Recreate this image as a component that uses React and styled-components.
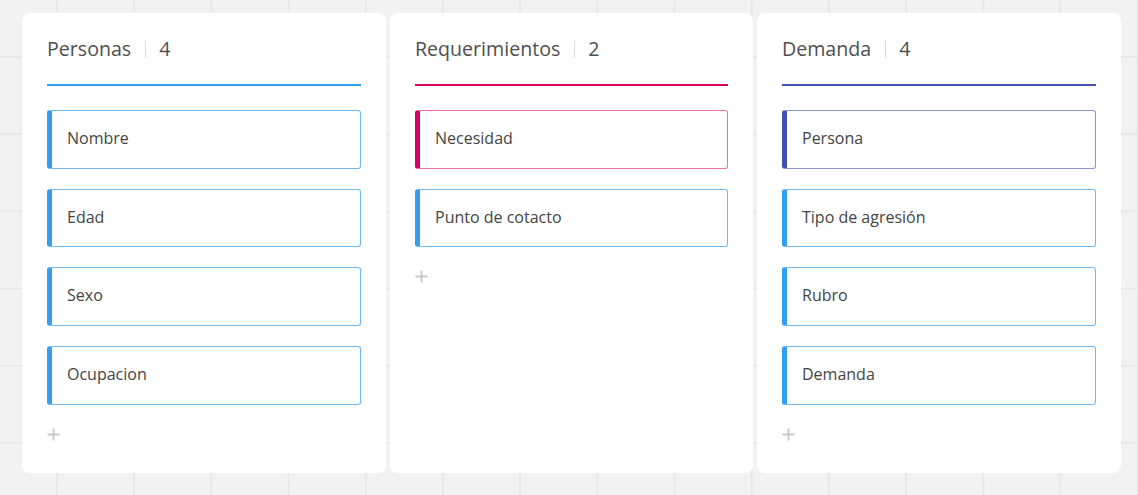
import React from 'react';
import styled, { createGlobalStyle } from 'styled-components';

const GlobalStyle = createGlobalStyle`
    html, body {
        margin: 0;
        padding: 0;
    }
    body {
        width: 1138px;
        height: 495px;
        overflow: hidden;
        font-family: "Open Sans", "Noto Sans", sans-serif;
        background-color: #f2f2f2;
        background-image:
            linear-gradient(to right, #e8e8e8 2px, transparent 2px),
            linear-gradient(to bottom, #e8e8e8 2px, transparent 2px);
        background-size: 77.2px 77.2px;
        background-position: 56px 56px;
    }
`;

const palette = {
    blue: { line: '#339ff0', bar: '#339ff0', border: '#6db9f5' },
    pink: { line: '#d9005f', bar: '#d9005f', border: '#ee72a4' },
    indigo: { line: '#4650b4', bar: '#4650b4', border: '#8e93d1' },
};

const columns = [
    {
        title: 'Personas',
        color: 'blue',
        items: [
            { label: 'Nombre', color: 'blue' },
            { label: 'Edad', color: 'blue' },
            { label: 'Sexo', color: 'blue' },
            { label: 'Ocupacion', color: 'blue' },
        ],
    },
    {
        title: 'Requerimientos',
        color: 'pink',
        items: [
            { label: 'Necesidad', color: 'pink' },
            { label: 'Punto de cotacto', color: 'blue' },
        ],
    },
    {
        title: 'Demanda',
        color: 'indigo',
        items: [
            { label: 'Persona', color: 'indigo' },
            { label: 'Tipo de agresión', color: 'blue' },
            { label: 'Rubro', color: 'blue' },
            { label: 'Demanda', color: 'blue' },
        ],
    },
];

const Board = styled.div`
    display: flex;
    align-items: stretch;
    gap: 4px;
    padding: 13px 17px 13px 22px;
`;

const Column = styled.section`
    flex: 0 0 ${(p) => p.$width}px;
    box-sizing: border-box;
    padding: 22px 25px 32px;
    background: #ffffff;
    border-radius: 8px;
    display: flex;
    flex-direction: column;
`;

const Header = styled.header`
    display: flex;
    align-items: center;
    padding-bottom: 21px;
    border-bottom: 2px solid ${(p) => palette[p.$color].line};
    font-size: 19.6px;
    line-height: 28px;
    color: #4f4f4f;
`;

const Separator = styled.span`
    width: 1px;
    height: 17px;
    margin: 0 13px 0 14px;
    background: #dcdcdc;
`;

const ItemList = styled.div`
    display: flex;
    flex-direction: column;
    gap: 20px;
    margin-top: 24px;
`;

const Item = styled.div`
    height: 58.7px;
    box-sizing: border-box;
    display: flex;
    align-items: center;
    padding: 0 0 3px 15px;
    border: 1px solid ${(p) => palette[p.$color].border};
    border-left: 5px solid ${(p) => palette[p.$color].bar};
    border-radius: 3px;
    font-size: 16px;
    color: #444444;
`;

const AddButton = styled.button`
    width: 13px;
    height: 13px;
    margin-top: 23px;
    padding: 0;
    border: none;
    background: none;
    display: flex;
    cursor: pointer;
`;

const PlusIcon = () => (
    <svg width="13" height="13" viewBox="0 0 13 13">
        <path d="M6.5 0.5v12M0.5 6.5h12" stroke="#c9c9c9" strokeWidth="1.8" fill="none" />
    </svg>
);

const widths = [364, 363, 364];

const App = () => {
    return (
        <>
            <GlobalStyle />
            <Board>
                {columns.map((col, i) => (
                    <Column key={col.title} $width={widths[i]}>
                        <Header $color={col.color}>
                            <span>{col.title}</span>
                            <Separator />
                            <span>{col.items.length}</span>
                        </Header>
                        <ItemList>
                            {col.items.map((item) => (
                                <Item key={item.label} $color={item.color}>
                                    {item.label}
                                </Item>
                            ))}
                        </ItemList>
                        <AddButton aria-label="Agregar">
                            <PlusIcon />
                        </AddButton>
                    </Column>
                ))}
            </Board>
        </>
    );
};

export default App;
